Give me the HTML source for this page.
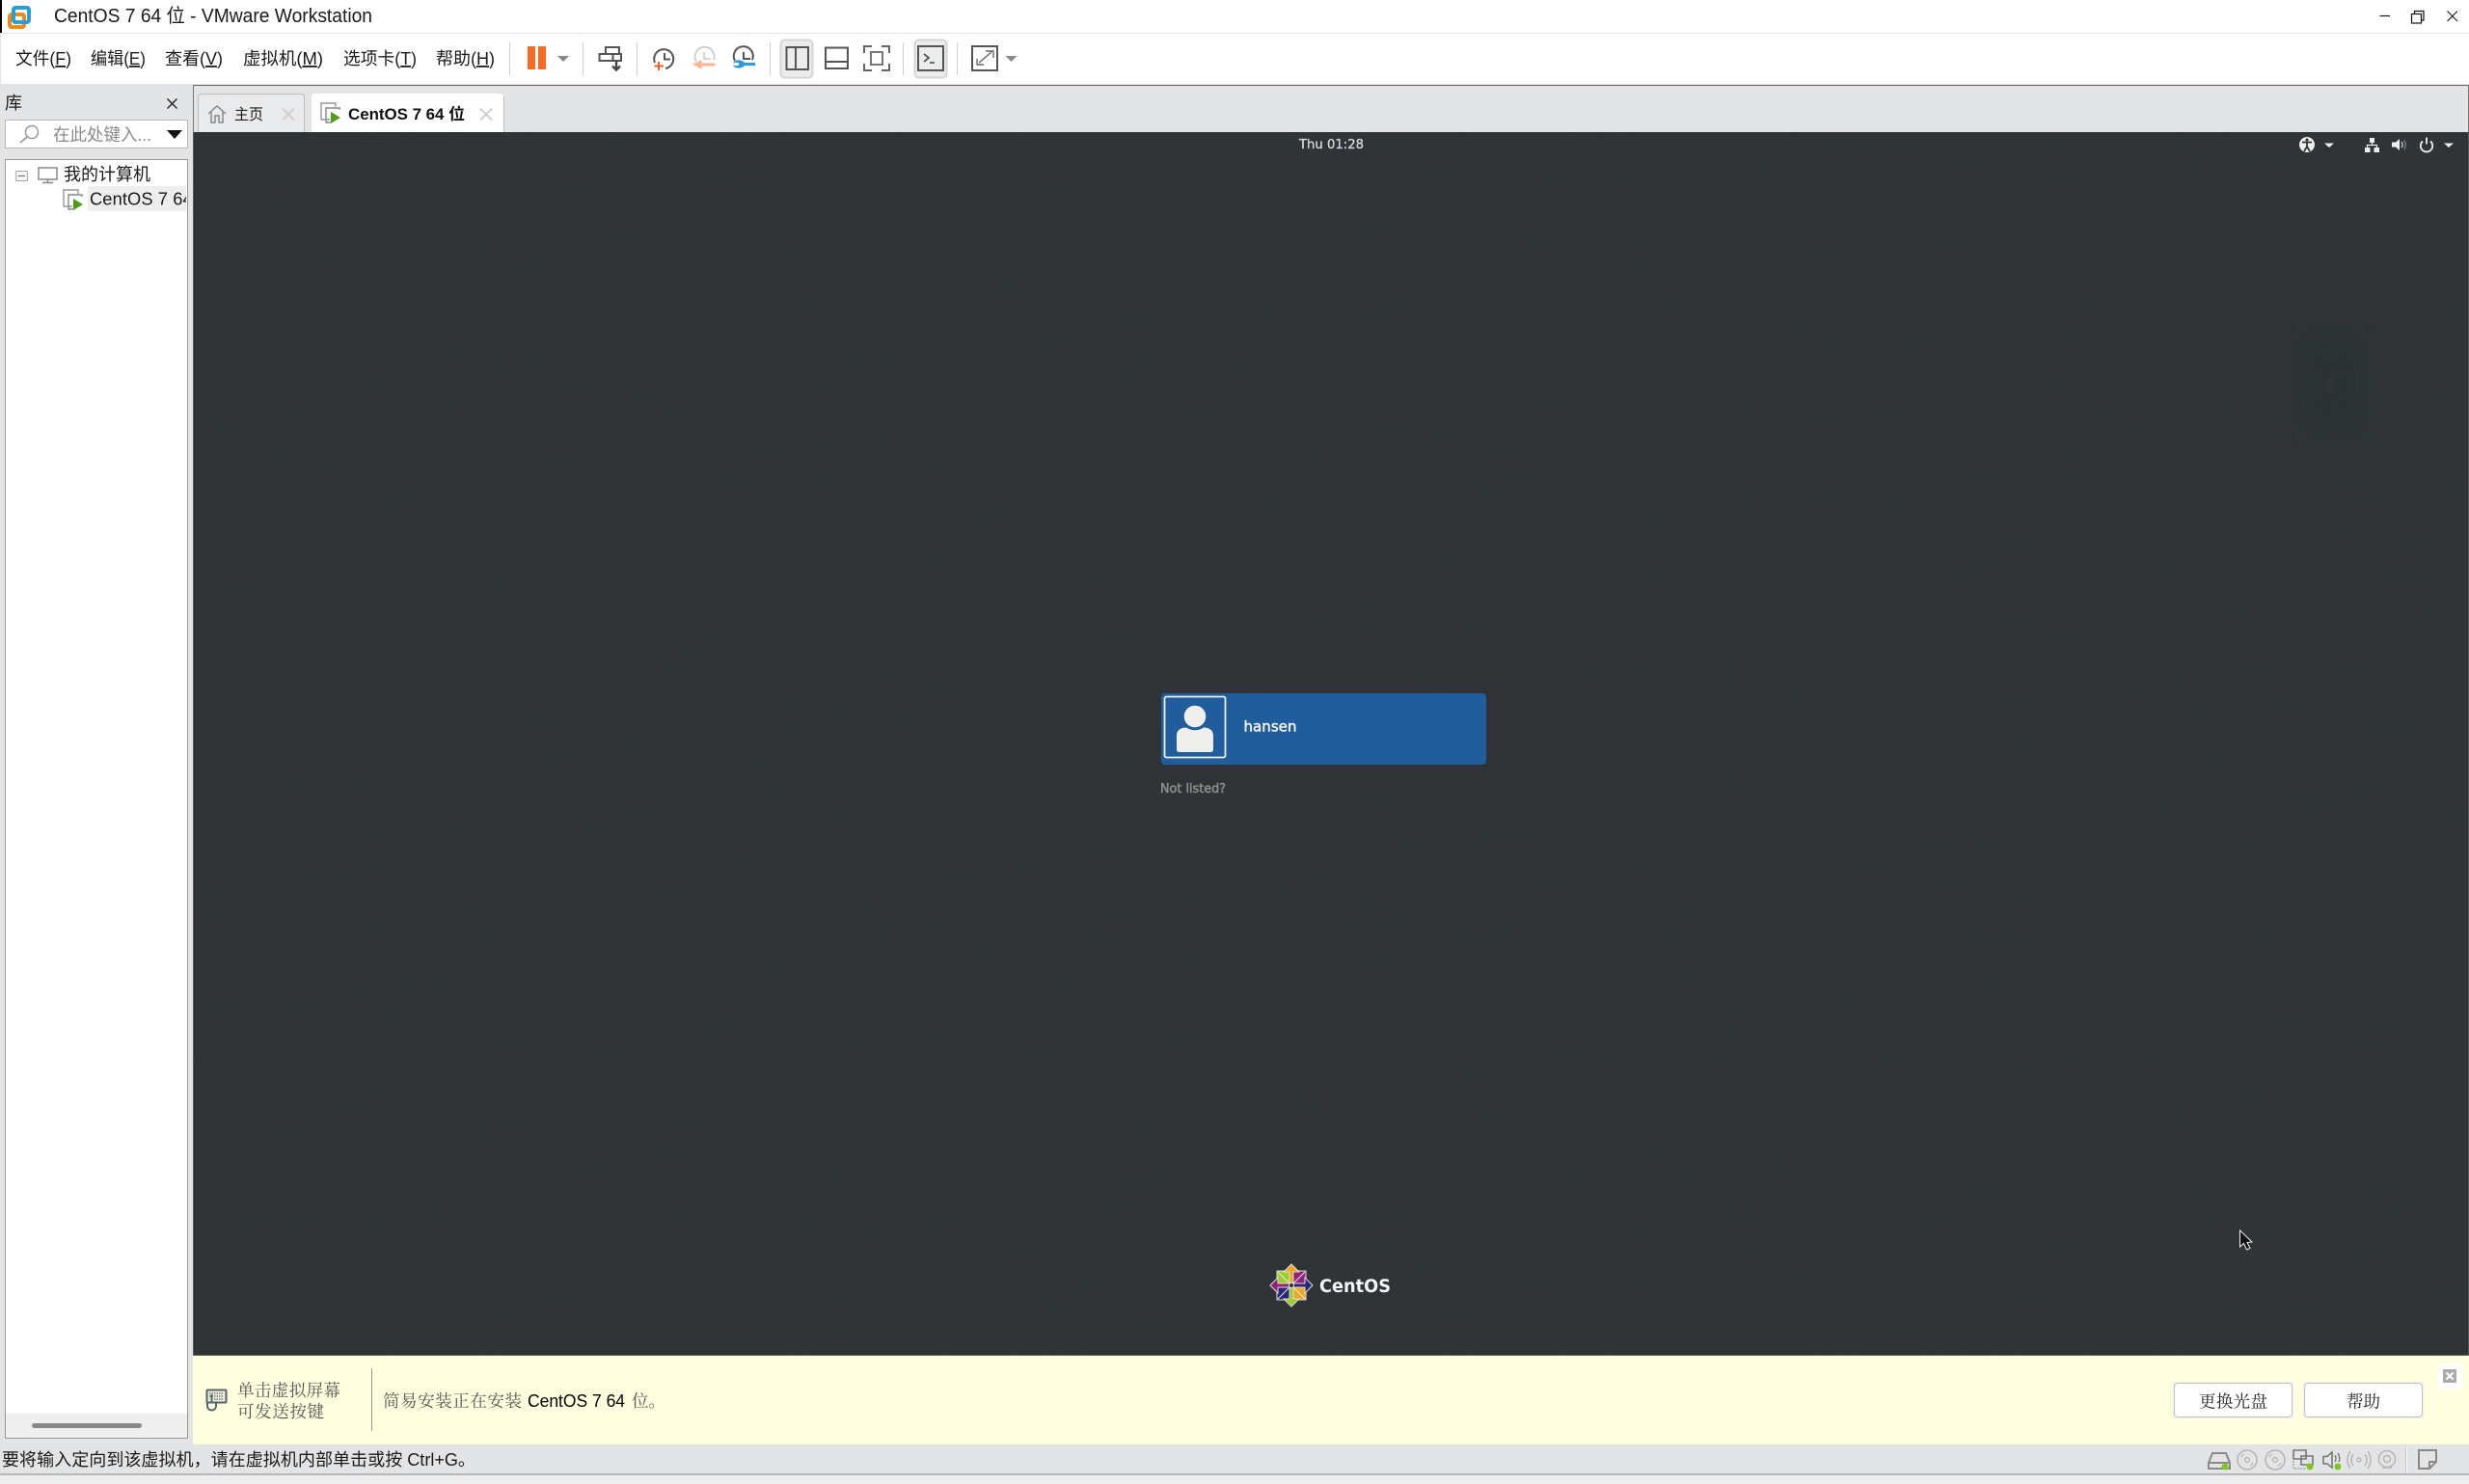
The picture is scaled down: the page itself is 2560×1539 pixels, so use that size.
<!DOCTYPE html>
<html><head><meta charset="utf-8"><title>CentOS 7 64 位 - VMware Workstation</title>
<style>
html,body{margin:0;padding:0;background:#fff;width:2560px;height:1539px;overflow:hidden}
svg{display:block;position:absolute;left:0;top:0}
.ui{font-family:"Liberation Sans","Noto Sans CJK SC",sans-serif;font-size:18px;fill:#1a1a1a}
.se{font-family:"Noto Serif CJK SC","Liberation Serif",serif;font-size:17.5px;fill:#555}
.g{font-family:"DejaVu Sans","Liberation Sans",sans-serif;font-weight:bold}
.ic{fill:none;stroke:#555;stroke-width:2}
.ic2{fill:none;stroke:#999;stroke-width:1.6}
</style></head><body>
<svg width="2560" height="1539" viewBox="0 0 2560 1539" xmlns="http://www.w3.org/2000/svg">
<defs>
<filter id="n" x="0" y="0" width="100%" height="100%"><feTurbulence type="fractalNoise" baseFrequency="0.9" numOctaves="2" seed="3"/><feColorMatrix values="0 0 0 0 1  0 0 0 0 1  0 0 0 0 1  0.5 0 0 0 -0.2"/></filter>
<filter id="bl"><feGaussianBlur stdDeviation="18"/></filter>
<g id="vm"><path d="M10 18H1V1H16V5" fill="none" stroke="#999" stroke-width="1.4"/><path d="M20 8V6H6V21H11" fill="none" stroke="#888" stroke-width="1.4"/><path d="M11 10L21 16L11 22Z" fill="#4f9a16"/></g>
<g id="cd"><circle r="10" fill="none" stroke="#b4b4b4" stroke-width="1.5"/><circle r="2.4" fill="none" stroke="#b4b4b4" stroke-width="1.2"/><path d="M-6-3A6.5 6.5 0 0 1-3-6M6 3A6.5 6.5 0 0 1 3 6" fill="none" stroke="#b4b4b4" stroke-width="1.2"/></g>
</defs>

<!-- base -->
<rect width="2560" height="1539" fill="#e3e4e6"/>
<rect width="2560" height="34" fill="#fff"/>
<rect x="0" y="0" width="2" height="34" fill="#000"/>
<rect y="34" x="2" width="2558" height="1" fill="#e2e2e2"/>
<rect x="1" y="35" width="2559" height="52" fill="#fff"/>

<!-- logo -->
<rect x="10" y="15" width="15" height="13" rx="2" fill="none" stroke="#f08a12" stroke-width="4"/>
<rect x="14" y="8" width="16" height="15" rx="2" fill="none" stroke="#2ba0d8" stroke-width="4"/>
<text class="ui" x="56" y="23" style="font-size:20px" textLength="330" lengthAdjust="spacingAndGlyphs">CentOS 7 64 位 - VMware Workstation</text>

<!-- window controls -->
<path d="M2467.5 16.5H2478" stroke="#111" stroke-width="1.2"/>
<path d="M2503.5 14V11.5H2513V21H2510.5" fill="none" stroke="#111" stroke-width="1.2"/><rect x="2500.5" y="14.5" width="10" height="9.5" fill="#fff" stroke="#111" stroke-width="1.2"/>
<path d="M2537.5 11.5L2548 22M2548 11.5L2537.5 22" stroke="#111" stroke-width="1"/>

<!-- menu -->
<g class="ui">
<text x="16" y="67" textLength="58" lengthAdjust="spacingAndGlyphs">文件(<tspan style="text-decoration:underline">F</tspan>)</text>
<text x="94" y="67" textLength="57" lengthAdjust="spacingAndGlyphs">编辑(<tspan style="text-decoration:underline">E</tspan>)</text>
<text x="171" y="67" textLength="60" lengthAdjust="spacingAndGlyphs">查看(<tspan style="text-decoration:underline">V</tspan>)</text>
<text x="252" y="67" textLength="83" lengthAdjust="spacingAndGlyphs">虚拟机(<tspan style="text-decoration:underline">M</tspan>)</text>
<text x="356" y="67" textLength="76" lengthAdjust="spacingAndGlyphs">选项卡(<tspan style="text-decoration:underline">T</tspan>)</text>
<text x="452" y="67" textLength="61" lengthAdjust="spacingAndGlyphs">帮助(<tspan style="text-decoration:underline">H</tspan>)</text>
</g>

<!-- toolbar -->
<g fill="#cfcfcf">
<rect x="528" y="44" width="1" height="34"/><rect x="604" y="44" width="1" height="34"/><rect x="660" y="44" width="1" height="34"/><rect x="798" y="44" width="1" height="34"/><rect x="936" y="44" width="1" height="34"/><rect x="992" y="44" width="1" height="34"/>
</g>
<rect x="547" y="48" width="8" height="24" fill="#f96b24"/><rect x="558" y="48" width="8" height="24" fill="#f96b24"/>
<path d="M578 58H590L584 64Z" fill="#888"/>
<!-- send keys -->
<path class="ic" d="M628 49H642V56H628ZM621.5 56H635.5V63H621.5ZM635.5 56H644V63H635.5Z"/>
<path d="M639 63V72M635 68.5L639 72.5L643 68.5" fill="none" stroke="#444" stroke-width="2.4"/>
<!-- clocks -->
<path class="ic" d="M679 65A10 10 0 1 1 690 71"/><path class="ic" d="M689 55V61.5H695"/>
<path d="M683 64V73M678.5 68.5H688" stroke="#e8622a" stroke-width="2" fill="none"/>
<path d="M722 64A10 10 0 1 1 740 62" fill="none" stroke="#c8c8c8" stroke-width="1.6"/><path d="M730 54V61H737" fill="none" stroke="#c8c8c8" stroke-width="1.6"/>
<path d="M741 66H727V63L719 66.5L727 71V68H741Z" fill="#ffb491" stroke="#ffb491"/>
<path class="ic" d="M762 63A10 10 0 1 1 780 62"/><path class="ic" d="M771 54V61H778"/>
<path d="M783 65H772C770 62 763 61 760 65H766V68H760C763 72 770 71 772 68H783Z" fill="#2e9bdf"/>
<!-- view -->
<rect x="809.5" y="41.5" width="33" height="39" rx="4" fill="#ebecec" stroke="#d6d6d6" stroke-width="2"/>
<path class="ic" d="M815.5 49H838V72H815.5ZM825 49V72"/>
<path class="ic" d="M856 49.5H879V71H856ZM856 64H879"/>
<path d="M896 55V48H904M914 48H922V55M922 66V73H914M904 73H896V66" fill="none" stroke="#666" stroke-width="2"/>
<rect x="903" y="54" width="12" height="13" fill="none" stroke="#777" stroke-width="2"/>
<rect x="948.5" y="41.5" width="33" height="39" rx="4" fill="#ebecec" stroke="#d6d6d6" stroke-width="2"/>
<rect x="952" y="48" width="26" height="25" fill="none" stroke="#555" stroke-width="2"/>
<path d="M958 56L963 60L958 64M964 65H969" fill="none" stroke="#444" stroke-width="1.6"/>
<rect x="1008" y="48" width="26" height="25" fill="none" stroke="#555" stroke-width="2"/>
<path d="M1013 61V67H1020M1030 60V53H1022M1015 65L1028 54" fill="none" stroke="#666" stroke-width="1.4"/>
<path d="M1042.5 58H1054.5L1048.5 64Z" fill="#888"/>

<!-- main chrome -->
<rect x="200" y="88" width="2360" height="1" fill="#666"/>
<rect x="200" y="88" width="1" height="49" fill="#777"/>
<rect x="2559" y="88" width="1" height="49" fill="#777"/>

<!-- sidebar -->
<text class="ui" x="5" y="113">库</text>
<path d="M173.5 102.5L183.5 112.5M183.5 102.5L173.5 112.5" stroke="#222" stroke-width="1.4"/>
<rect x="5.5" y="124.5" width="189" height="29" fill="#fff" stroke="#b9b9b9"/>
<circle cx="33" cy="137" r="6.5" fill="none" stroke="#999" stroke-width="1.5"/><path d="M28 142L21 148" stroke="#999" stroke-width="1.8"/>
<text class="ui" x="55" y="146" style="fill:#8a8a8a" textLength="102" lengthAdjust="spacingAndGlyphs">在此处键入...</text>
<path d="M173 135H189L181 144Z" fill="#111"/>
<rect x="5.5" y="165.5" width="189" height="1326" fill="#fff" stroke="#9a9a9a"/>
<rect x="6" y="1466" width="188" height="25" fill="#efefef"/>
<rect x="33" y="1476" width="114" height="5" rx="2.5" fill="#888"/>
<rect x="16.5" y="177.5" width="12" height="10" fill="#f5f5f5" stroke="#aaa"/><path d="M19 182.5H26" stroke="#666"/>
<rect x="40" y="174" width="19" height="12" fill="none" stroke="#888" stroke-width="1.5"/><path d="M49.5 186V189M44 189.5H55" stroke="#888" stroke-width="1.5"/>
<text class="ui" x="66" y="187" textLength="90" lengthAdjust="spacingAndGlyphs">我的计算机</text>
<use href="#vm" x="65" y="196"/>
<rect x="91" y="193" width="102" height="26" fill="#eeeeee"/>
<svg x="91" y="193" width="102" height="26" viewBox="0 0 102 26"><text class="ui" x="2" y="19.5" style="font-size:18.3px;letter-spacing:.1px">CentOS 7 64 位</text></svg>

<!-- tabs -->
<path d="M205.5 137V101Q205.5 97.5 209 97.5H312Q315.5 97.5 315.5 101V137" fill="#e9eaeb" stroke="#bdbdbd"/>
<path d="M323 137V101Q323 97 327 97H518Q522 97 522 101V137Z" fill="#fff"/>
<path d="M522.5 100V137" stroke="#bdbdbd"/>
<path d="M216 118L225 110L234 118M219 116V127H223V120H227V127H231V116" fill="none" stroke="#888" stroke-width="1.5"/>
<text class="ui" x="243" y="124" textLength="30" lengthAdjust="spacingAndGlyphs" style="font-size:16px">主页</text>
<path d="M293 112.5L305 124.5M305 112.5L293 124.5" stroke="#cfcfcf" stroke-width="2"/>
<use href="#vm" x="332" y="106"/>
<text class="ui" x="361" y="124" textLength="121" lengthAdjust="spacingAndGlyphs" style="font-size:16.5px;font-weight:bold;fill:#111">CentOS 7 64 位</text>
<path d="M498 112.5L510 124.5M510 112.5L498 124.5" stroke="#cfcfcf" stroke-width="2"/>

<!-- VM screen -->
<rect x="201" y="137" width="2358" height="1269" fill="#2e3336"/>
<svg x="201" y="137" width="2358" height="1269"><rect width="2358" height="1269" filter="url(#n)" opacity=".09"/></svg>
<ellipse cx="2417" cy="398" rx="34" ry="50" fill="#2c3031" filter="url(#bl)"/>
<rect x="200" y="137" width="1" height="1269" fill="#55585a"/>
<rect x="2559" y="137" width="1" height="1269" fill="#55585a"/>
<rect x="200" y="1405" width="2360" height="1" fill="#606258"/>

<!-- gnome panel -->
<text class="g" x="1347" y="154" fill="#dcdcda" style="font-size:13px;font-weight:normal" stroke="#dcdcda" stroke-width=".25" textLength="67" lengthAdjust="spacingAndGlyphs">Thu 01:28</text>
<circle cx="2392" cy="150" r="8" fill="#eeeeec"/>
<path d="M2387 147.5L2397 147.5M2392 147.5V152L2389 157M2392 152L2395 157" stroke="#2e3336" stroke-width="1.8" fill="none"/><circle cx="2392" cy="145" r="1.5" fill="#2e3336"/>
<path d="M2410 148.5H2420L2415 153Z" fill="#eeeeec"/>
<path d="M2457 143H2462V148H2457ZM2452 153H2457.5V158H2452ZM2461.5 153H2467V158H2461.5Z" fill="#eeeeec"/><path d="M2459.5 148V150.5M2454.5 153V150.5H2464.5V153" fill="none" stroke="#eeeeec" stroke-width="1.2"/>
<path d="M2480 147.5H2484L2488 144V156L2484 152.5H2480Z" fill="#eeeeec"/><path d="M2490 147Q2492 150 2490 153" fill="none" stroke="#bbb" stroke-width="1.5"/><path d="M2492.5 145Q2496 150 2492.5 155" fill="none" stroke="#777" stroke-width="1.5"/>
<path d="M2512 146.5A6.2 6.2 0 1 0 2520 146.5" fill="none" stroke="#eeeeec" stroke-width="1.8"/><path d="M2516 142.5V149.5" stroke="#eeeeec" stroke-width="1.8"/>
<path d="M2534 148.5H2544L2539 153Z" fill="#eeeeec"/>

<!-- user -->
<rect x="1204" y="719" width="337" height="74" rx="4" fill="#215d9c"/>
<rect x="1207.5" y="722.5" width="63" height="63" rx="2" fill="none" stroke="#eef2f6" stroke-width="1.8"/>
<circle cx="1239" cy="743" r="11.3" fill="#eeeeec"/>
<path d="M1220 763C1220 756 1226 754.500 1230 754.500Q1239 760 1248 754.500C1252 754.500 1258 756 1258 763V777Q1258 780 1255 780H1223Q1220 780 1220 777Z" fill="#eeeeec"/>
<text class="g" x="1289.5" y="758.5" fill="#eeeeec" style="font-size:15.5px;font-weight:normal" stroke="#eeeeec" stroke-width=".55" textLength="55" lengthAdjust="spacingAndGlyphs">hansen</text>
<text class="g" x="1203" y="822" fill="#8a8c85" style="font-size:13px;font-weight:normal" stroke="#8a8c85" stroke-width=".55" textLength="68" lengthAdjust="spacingAndGlyphs">Not listed?</text>

<!-- centos logo -->
<g transform="translate(1339,1333)">
<path d="M-15.500-15.500H15.500V15.500H-15.500Z" fill="#ddd"/>
<path d="M-14.500-14.500H-2V-4L-4-2H-14.500Z" fill="#9ccd2a"/>
<path d="M14.500-14.500H2V-4L4-2H14.500Z" fill="#932279"/>
<path d="M-14.500 14.500H-2V4L-4 2H-14.500Z" fill="#262577"/>
<path d="M14.500 14.500H2V4L4 2H14.500Z" fill="#efa724"/>
<path d="M-14-14L-3-3M14-14L3-3M-14 14L-3 3M14 14L3 3" stroke="#e6e6e6" stroke-width="1"/>
<path d="M0-22L8-14H2V-2H-2V-14H-8Z" fill="#efa724" stroke="#ddd" stroke-width="1"/>
<path d="M22 0L14 8V2H2V-2H14V-8Z" fill="#262577" stroke="#ddd" stroke-width="1"/>
<path d="M0 22L8 14H2V2H-2V14H-8Z" fill="#9ccd2a" stroke="#ddd" stroke-width="1"/>
<path d="M-22 0L-14 8V2H-2V-2H-14V-8Z" fill="#932279" stroke="#ddd" stroke-width="1"/>
<circle r="2.5" fill="#2e3336" stroke="#ddd"/>
</g>
<text class="g" x="1368" y="1340" fill="#f4f4f4" style="font-size:19px" textLength="74" lengthAdjust="spacingAndGlyphs">CentOS</text>

<!-- cursor -->
<path d="M2322.500 1276V1293L2326.500 1289.500L2329.500 1296L2333 1294.500L2330 1288.500L2335 1288Z" fill="#111" stroke="#eee" stroke-width="1"/>

<!-- yellow bar -->
<rect x="200" y="1406" width="2360" height="92" fill="#ffffdf"/>
<rect x="214.500" y="1441.500" width="20" height="13" rx="1" fill="#eeeed8" stroke="#55666c" stroke-width="2"/>
<path d="M217 1445H232M217 1448H232M222 1451H232" stroke="#6f7f84" stroke-width="1.4" stroke-dasharray="1.500 1"/>
<path d="M215 1454V1458A4.500 4.500 0 0 0 224 1458V1454M219.500 1446V1454" fill="none" stroke="#55666c" stroke-width="2"/>
<g class="se">
<text x="246" y="1448" textLength="107">单击虚拟屏幕</text>
<text x="246" y="1470" textLength="90">可发送按键</text>
<text x="397" y="1459" textLength="144">简易安装正在安装</text>
<text x="655" y="1459" textLength="35">位。</text>
</g>
<rect x="385" y="1419" width="1" height="65" fill="#999"/>
<text class="ui" x="547" y="1459" textLength="101" lengthAdjust="spacingAndGlyphs" style="fill:#000">CentOS 7 64</text>
<rect x="2528" y="1414" width="25" height="27" fill="#fff"/>
<rect x="2533" y="1420" width="14" height="14" rx="1" fill="#aaa"/><path d="M2536.500 1423.500L2543.500 1430.500M2543.500 1423.500L2536.500 1430.500" stroke="#fff" stroke-width="2"/>
<rect x="2253" y="1433" width="125" height="38" fill="#f1f1ee"/>
<rect x="2254.500" y="1434.500" width="122" height="35" rx="4" fill="#fff" stroke="#c0c0c6"/>
<rect x="2388" y="1433" width="125" height="38" fill="#f1f1ee"/>
<rect x="2389.500" y="1434.500" width="122" height="35" rx="4" fill="#fff" stroke="#c0c0c6"/>
<text class="se" x="2280" y="1459.500" style="fill:#222" textLength="71">更换光盘</text>
<text class="se" x="2433" y="1459.500" style="fill:#222" textLength="35">帮助</text>

<!-- status bar -->
<text class="ui" x="2" y="1520" textLength="491" lengthAdjust="spacingAndGlyphs">要将输入定向到该虚拟机，请在虚拟机内部单击或按 Ctrl+G。</text>
<rect x="0" y="1528" width="2560" height="2" fill="#b8b8b8"/>
<rect x="0" y="1530" width="2560" height="9" fill="#eeeeee"/>
<!-- status icons -->
<path d="M2294 1507H2308L2312 1517V1523H2290V1517ZM2290 1517H2312" fill="none" stroke="#8a8a8a" stroke-width="2"/>
<circle cx="2307" cy="1521" r="3.500" fill="#7ec71f"/>
<use href="#cd" x="2330" y="1514"/><use href="#cd" x="2359" y="1514"/>
<path d="M2378 1504H2391V1513H2378ZM2386 1510H2398V1519H2386Z" fill="#e3e4e6" stroke="#777" stroke-width="1.600"/>
<path d="M2378 1515V1523H2390" fill="none" stroke="#888" stroke-width="1" stroke-dasharray="2 1"/>
<circle cx="2395" cy="1521" r="3.500" fill="#7ec71f"/>
<path d="M2409 1510.500H2413L2418 1506V1522L2413 1518H2409Z" fill="none" stroke="#777" stroke-width="1.600"/>
<path d="M2421 1509Q2423 1513 2421 1516M2424 1507Q2427 1512 2425 1516" fill="none" stroke="#777" stroke-width="1.400"/>
<circle cx="2424" cy="1521" r="3.500" fill="#7ec71f"/>
<g fill="none" stroke="#b4b4b4" stroke-width="1.400">
<circle cx="2446" cy="1514" r="2"/><path d="M2440 1508Q2436 1514 2440 1520M2452 1508Q2456 1514 2452 1520M2437 1505Q2431 1514 2437 1523M2455 1505Q2461 1514 2455 1523"/>
<circle cx="2475" cy="1513" r="8.500"/><circle cx="2475" cy="1513" r="3.500"/><path d="M2470 1522H2480"/>
</g>
<rect x="2495" y="1501" width="1" height="26" fill="#fff"/><rect x="2494" y="1501" width="1" height="26" fill="#c4c4c4"/>
<path d="M2508 1504H2526V1516L2519 1523H2508ZM2526 1516H2519V1523" fill="none" stroke="#888" stroke-width="2"/>
</svg>
</body></html>
